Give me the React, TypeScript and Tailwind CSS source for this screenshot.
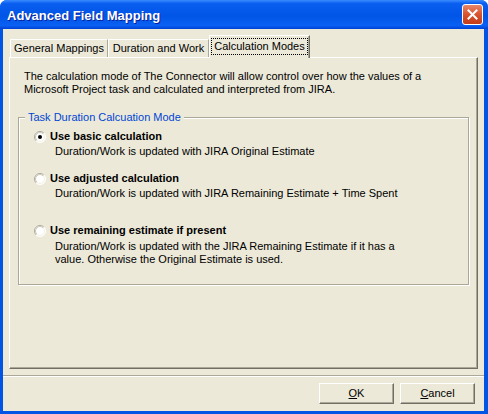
import { useId } from 'react'

const body = "font-['Liberation_Sans',Arial,sans-serif] text-[11px] leading-[13px] text-black"

function Radio({ checked }: { checked?: boolean }) {
  const id = useId().replace(/:/g, '')
  return (
    <svg width="12" height="12" viewBox="0 0 12 12" className="shrink-0">
      <defs>
        <linearGradient id={`o${id}`} x1="0" y1="0" x2="1" y2="1">
          <stop offset="0.45" stopColor="#ACA899" />
          <stop offset="0.55" stopColor="#FFFFFF" />
        </linearGradient>
        <linearGradient id={`i${id}`} x1="0" y1="0" x2="1" y2="1">
          <stop offset="0.45" stopColor="#C8C5B8" />
          <stop offset="0.55" stopColor="#F1EFE2" />
        </linearGradient>
      </defs>
      <circle cx="6" cy="6" r="5.5" fill="#fff" stroke={`url(#o${id})`} />
      <circle cx="6" cy="6" r="4.5" fill="#fff" stroke={`url(#i${id})`} />
      {checked && <circle cx="6" cy="6" r="2" fill="#000" />}
    </svg>
  )
}

function Tab({ label, width, active }: { label: string; width: string; active?: boolean }) {
  if (active) {
    return (
      <div className={`${width} h-[23px] -mb-px relative z-10 bg-[#ECE9D8] border-t border-l border-white border-r border-r-[#716F64] shadow-[inset_-1px_0_0_#ACA899] flex items-start justify-center pt-[3px]`}>
        <span className="outline outline-1 outline-dotted outline-black px-[2px] py-px">{label}</span>
      </div>
    )
  }
  return (
    <div className={`${width} h-[18px] bg-[#ECE9D8] border-t border-l border-white border-r border-r-[#ACA899] flex items-center justify-center`}>
      {label}
    </div>
  )
}

function Option({ label, children, checked }: { label: string; children: React.ReactNode; checked?: boolean }) {
  return (
    <div>
      <div className="flex items-center gap-[4px] h-[13px]">
        <Radio checked={checked} />
        <span className="font-bold">{label}</span>
      </div>
      {children}
    </div>
  )
}

function Button({ children }: { children: React.ReactNode }) {
  return (
    <button className="w-[75px] h-[21px] bg-[#ECE9D8] border border-white border-r-[#716F64] border-b-[#716F64] shadow-[inset_-1px_-1px_0_#ACA899] flex items-center justify-center">
      {children}
    </button>
  )
}

export default function App() {
  return (
    <div className="w-[488px] h-[414px] bg-white">
      <div className={`w-[488px] h-[414px] flex flex-col rounded-t-[7px] bg-[#0055E5] ${body}`}>
        {/* title bar */}
        <div className="h-[29px] shrink-0 rounded-t-[7px] bg-[linear-gradient(180deg,#3A8CFF_0%,#0A5EF0_12%,#0055E6_55%,#0A60F2_88%,#0040D5_100%)] flex items-center justify-between pl-[7px] pr-[5px]">
          <span className="text-white font-bold text-[13px] [text-shadow:1px_1px_0_#0A1E9A] pt-px">
            Advanced Field Mapping
          </span>
          <div className="w-[21px] h-[21px] rounded-[3px] border border-white bg-[linear-gradient(180deg,#E8876A_0%,#D8532E_50%,#C43C1A_100%)] flex items-center justify-center">
            <svg width="11" height="11" viewBox="0 0 11 11">
              <path d="M1.5 1.5 L9.5 9.5 M9.5 1.5 L1.5 9.5" stroke="#fff" strokeWidth="2" strokeLinecap="square" />
            </svg>
          </div>
        </div>

        {/* client area */}
        <div className="flex-1 ml-[3px] mr-[4px] mb-[3px] bg-[#ECE9D8] flex flex-col">
          <div className="flex items-end h-[22px] mt-[6px] ml-[7px]">
            <Tab label="General Mappings" width="w-[98px]" />
            <Tab label="Duration and Work" width="w-[101px]" />
            <Tab label="Calculation Modes" width="w-[101px]" active />
          </div>

          <div className="mx-[6px] h-[312px] border-t border-l border-white border-r border-b border-r-[#716F64] border-b-[#716F64] shadow-[inset_-1px_-1px_0_#ACA899] pt-[12px] px-[8px]">
            <p className="pl-[6px]">
              The calculation mode of The Connector will allow control over how the values of a
              <br />
              Microsoft Project task and calculated and interpreted from JIRA.
            </p>

            <fieldset className="mt-[15px] border border-[#ACA899] shadow-[inset_1px_1px_0_#fff,1px_1px_0_#fff] pb-[18px]">
              <legend className="ml-[6px] px-[3px] bg-[#ECE9D8] text-[#0046D5]">Task Duration Calcuation Mode</legend>
              <div className="pl-[15px] pt-[6px]">
                <Option label="Use basic calculation" checked>
                  <p className="pl-[21px] mt-[2px]">Duration/Work is updated with JIRA Original Estimate</p>
                </Option>
                <div className="mt-[14px]">
                  <Option label="Use adjusted calculation">
                    <p className="pl-[21px] mt-[2px]">Duration/Work is updated with JIRA Remaining Estimate + Time Spent</p>
                  </Option>
                </div>
                <div className="mt-[24px]">
                  <Option label="Use remaining estimate if present">
                    <p className="pl-[21px] mt-[3px]">
                      Duration/Work is updated with the JIRA Remaining Estimate if it has a
                      <br />
                      value. Otherwise the Original Estimate is used.
                    </p>
                  </Option>
                </div>
              </div>
            </fieldset>
          </div>

          <div className="mt-[6px] h-[2px] border-t border-[#ACA899] border-b border-b-white" />

          <div className="flex justify-end gap-[6px] mt-[6px] pr-[9px]">
            <Button>
              <span><span className="underline">O</span>K</span>
            </Button>
            <Button>
              <span><span className="underline">C</span>ancel</span>
            </Button>
          </div>
        </div>
      </div>
    </div>
  )
}
